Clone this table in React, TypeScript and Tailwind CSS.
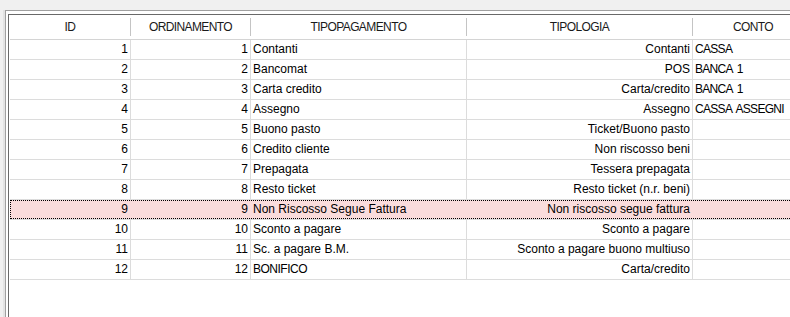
import React from 'react';

interface Row {
  id: number;
  ord: number;
  tipoPagamento: string;
  tipologia: string;
  conto: string;
}

const rows: Row[] = [
  { id: 1, ord: 1, tipoPagamento: 'Contanti', tipologia: 'Contanti', conto: 'CASSA' },
  { id: 2, ord: 2, tipoPagamento: 'Bancomat', tipologia: 'POS', conto: 'BANCA 1' },
  { id: 3, ord: 3, tipoPagamento: 'Carta credito', tipologia: 'Carta/credito', conto: 'BANCA 1' },
  { id: 4, ord: 4, tipoPagamento: 'Assegno', tipologia: 'Assegno', conto: 'CASSA ASSEGNI' },
  { id: 5, ord: 5, tipoPagamento: 'Buono pasto', tipologia: 'Ticket/Buono pasto', conto: '' },
  { id: 6, ord: 6, tipoPagamento: 'Credito cliente', tipologia: 'Non riscosso beni', conto: '' },
  { id: 7, ord: 7, tipoPagamento: 'Prepagata', tipologia: 'Tessera prepagata', conto: '' },
  { id: 8, ord: 8, tipoPagamento: 'Resto ticket', tipologia: 'Resto ticket (n.r. beni)', conto: '' },
  { id: 9, ord: 9, tipoPagamento: 'Non Riscosso Segue Fattura', tipologia: 'Non riscosso segue fattura', conto: '' },
  { id: 10, ord: 10, tipoPagamento: 'Sconto a pagare', tipologia: 'Sconto a pagare', conto: '' },
  { id: 11, ord: 11, tipoPagamento: 'Sc. a pagare B.M.', tipologia: 'Sconto a pagare buono multiuso', conto: '' },
  { id: 12, ord: 12, tipoPagamento: 'BONIFICO', tipologia: 'Carta/credito', conto: '' },
];

const SELECTED_ID = 9;

function HeaderCell({ label, width, sep = true }: { label: string; width: string; sep?: boolean }) {
  return (
    <div className={`flex items-center shrink-0 ${width}`}>
      <div className="flex-1 text-center tracking-[-0.6px]">{label}</div>
      {sep && <div className="w-px h-[18px] bg-[#c4c4c4]" />}
    </div>
  );
}

export default function App() {
  return (
    <div
      className="w-[790px] h-[317px] overflow-hidden bg-[#f0f0f0] flex pt-[10px] text-[12px] text-black"
      style={{ fontFamily: '"Liberation Sans", Arial, sans-serif' }}
    >
      <div className="w-[3px] shrink-0" />
      <div className="w-[2px] shrink-0 bg-[#e3e3e3]" />
      <div className="flex-1 border-l border-t border-[#a0a0a0] bg-white pl-[2px] pt-[3px] flex">
        <div className="flex-1 border-l border-t border-[#696969] pl-[1px] flex flex-col">
          {/* Header */}
          <div className="flex h-[25px] border-b border-[#d4d4d4] text-[#1a1a1a]">
            <HeaderCell label="ID" width="w-[121px]" />
            <HeaderCell label="ORDINAMENTO" width="w-[120px]" />
            <HeaderCell label="TIPOPAGAMENTO" width="w-[216px]" />
            <HeaderCell label="TIPOLOGIA" width="w-[226px]" />
            <HeaderCell label="CONTO" width="w-[120px]" sep={false} />
          </div>

          {rows.map((row) => {
            const selected = row.id === SELECTED_ID;
            const line = selected ? 'border-transparent' : 'border-[#dcdcdc]';
            const caps = row.tipoPagamento === row.tipoPagamento.toUpperCase() ? 'tracking-[-0.5px]' : '';
            return (
              <div key={row.id} className="border-b border-[#dcdcdc] w-[804px]">
                <div
                  className={`flex h-[19px] leading-[19px] ${
                    selected ? 'bg-[#fadcdc] outline-1 outline-dotted outline-black -outline-offset-1' : ''
                  }`}
                >
                  <div className={`w-[121px] shrink-0 border-r ${line} text-right pr-[2px]`}>{row.id}</div>
                  <div className={`w-[120px] shrink-0 border-r ${line} text-right pr-[2px]`}>{row.ord}</div>
                  <div className={`w-[216px] shrink-0 border-r ${line} pl-[2px] whitespace-nowrap ${caps}`}>
                    {row.tipoPagamento}
                  </div>
                  <div className={`w-[226px] shrink-0 border-r ${line} text-right pr-[2px] whitespace-nowrap`}>
                    {row.tipologia}
                  </div>
                  <div className="w-[120px] shrink-0 pl-[2px] whitespace-nowrap tracking-[-0.7px] [word-spacing:2px]">
                    {row.conto}
                  </div>
                </div>
              </div>
            );
          })}
        </div>
      </div>
    </div>
  );
}
